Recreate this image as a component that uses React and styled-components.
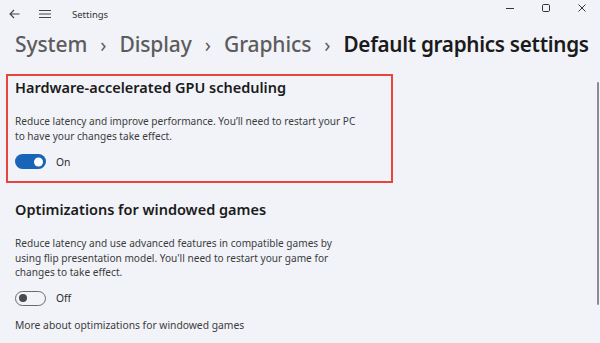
import React from "react";
import styled, { createGlobalStyle } from "styled-components";

const GlobalStyle = createGlobalStyle`
  html, body {
    margin: 0;
    padding: 0;
    background: #f1f3f8;
  }
  body {
    font-family: "Noto Sans", "Open Sans", sans-serif;
    color: #1b1b1b;
  }
`;

const App = () => {
  return (
    <>
      <GlobalStyle />
      <Window>
        <TitleBar>
          <TitleLeft>
            <IconButton aria-label="Back">
              <svg width="11" height="10" viewBox="0 0 11 10" fill="none" stroke="#444" strokeWidth="1.1">
                <path d="M10.5 5H1M5 1L1 5l4 4" />
              </svg>
            </IconButton>
            <IconButton aria-label="Menu">
              <svg width="12" height="10" viewBox="0 0 12 10" fill="none" stroke="#444" strokeWidth="1.1">
                <path d="M0 1.5h12M0 5h12M0 8.5h12" />
              </svg>
            </IconButton>
            <AppName>Settings</AppName>
          </TitleLeft>
          <Controls>
            <ControlButton aria-label="Minimize">
              <svg width="10" height="10" viewBox="0 0 10 10" stroke="#333" strokeWidth="1">
                <path d="M1 5.5h8" />
              </svg>
            </ControlButton>
            <ControlButton aria-label="Maximize">
              <svg width="10" height="10" viewBox="0 0 10 10" fill="none" stroke="#333" strokeWidth="1">
                <rect x="1.5" y="1.5" width="7" height="7" rx="1.2" />
              </svg>
            </ControlButton>
            <ControlButton aria-label="Close">
              <svg width="10" height="10" viewBox="0 0 10 10" stroke="#333" strokeWidth="1">
                <path d="M1.5 1.5l7 7M8.5 1.5l-7 7" />
              </svg>
            </ControlButton>
          </Controls>
        </TitleBar>

        <Breadcrumb>
          <Crumb>System</Crumb>
          <Chevron>›</Chevron>
          <Crumb>Display</Crumb>
          <Chevron>›</Chevron>
          <Crumb>Graphics</Crumb>
          <Chevron>›</Chevron>
          <Crumb current>Default graphics settings</Crumb>
        </Breadcrumb>

        <Content>
          <Section highlighted>
            <SectionTitle>Hardware-accelerated GPU scheduling</SectionTitle>
            <Description>
              Reduce latency and improve performance. You’ll need to restart your PC
              <br />
              to have your changes take effect.
            </Description>
            <ToggleRow>
              <Toggle on />
              <ToggleLabel>On</ToggleLabel>
            </ToggleRow>
          </Section>

          <Section>
            <SectionTitle>Optimizations for windowed games</SectionTitle>
            <Description>
              Reduce latency and use advanced features in compatible games by
              <br />
              using flip presentation model. You'll need to restart your game for
              <br />
              changes to take effect.
            </Description>
            <ToggleRow>
              <Toggle />
              <ToggleLabel>Off</ToggleLabel>
            </ToggleRow>
            <MoreLink>More about optimizations for windowed games</MoreLink>
          </Section>
        </Content>

        <Scrollbar />
      </Window>
    </>
  );
};

export default App;

const Window = styled.div`
  position: relative;
  width: 600px;
  height: 343px;
  overflow: hidden;
  background: #f1f3f8;
`;

const TitleBar = styled.div`
  height: 28px;
  display: flex;
  align-items: center;
  justify-content: space-between;
`;

const TitleLeft = styled.div`
  display: flex;
  align-items: center;
  padding-left: 8px;
`;

const IconButton = styled.div`
  width: 12px;
  display: flex;
  align-items: center;
  justify-content: center;
  margin-right: 19px;
`;

const AppName = styled.span`
  font-size: 9.5px;
  color: #333;
  margin-left: 2px;
`;

const Controls = styled.div`
  display: flex;
  align-items: center;
  align-self: flex-start;
  height: 16px;
`;

const ControlButton = styled.div`
  width: 36px;
  display: flex;
  justify-content: center;
`;

const Breadcrumb = styled.div`
  display: flex;
  align-items: baseline;
  padding: 2px 0 0 15px;
  height: 36px;
  white-space: nowrap;
`;

const Crumb = styled.span`
  font-size: ${(p) => (p.current ? "20.7px" : "21px")};
  font-weight: ${(p) => (p.current ? 600 : 500)};
  color: ${(p) => (p.current ? "#1b1b1b" : "#5c5c5c")};
  letter-spacing: ${(p) => (p.current ? "-0.3px" : "-0.1px")};
`;

const Chevron = styled.span`
  font-size: 20px;
  color: #5c5c5c;
  margin: 0 13px;
`;

const Content = styled.div`
  padding: 8px 0 0 6px;
  width: 387px;
`;

const Section = styled.div`
  border: 2px solid ${(p) => (p.highlighted ? "#e8453c" : "transparent")};
  padding: 0 8px 12px 7px;
  margin-bottom: 13px;
`;

const SectionTitle = styled.h2`
  margin: 0;
  font-size: 14.5px;
  font-weight: 600;
  color: #1b1b1b;
  line-height: 22px;
`;

const Description = styled.p`
  margin: 16px 0 0;
  font-size: 10.1px;
  line-height: 14.6px;
  color: #3c3c3c;
`;

const ToggleRow = styled.div`
  display: flex;
  align-items: center;
  margin-top: 11px;
`;

const Toggle = styled.div`
  position: relative;
  width: 31px;
  height: 15px;
  box-sizing: border-box;
  border-radius: 8px;
  background: ${(p) => (p.on ? "#1764b8" : "transparent")};
  border: ${(p) => (p.on ? "none" : "1px solid #6a6a6a")};

  &::after {
    content: "";
    position: absolute;
    top: 50%;
    transform: translateY(-50%);
    left: ${(p) => (p.on ? "19px" : "3px")};
    width: ${(p) => (p.on ? "9px" : "8px")};
    height: ${(p) => (p.on ? "9px" : "8px")};
    border-radius: 50%;
    background: ${(p) => (p.on ? "#fff" : "#4a4a4a")};
  }
`;

const ToggleLabel = styled.span`
  margin-left: 10px;
  font-size: 10.3px;
  color: #2a2a2a;
`;

const MoreLink = styled.div`
  margin-top: 12px;
  font-size: 10.3px;
  color: #3c3c3c;
`;

const Scrollbar = styled.div`
  position: absolute;
  right: 1px;
  top: 82px;
  width: 2px;
  height: 223px;
  border-radius: 1px;
  background: #8b8b91;
`;
